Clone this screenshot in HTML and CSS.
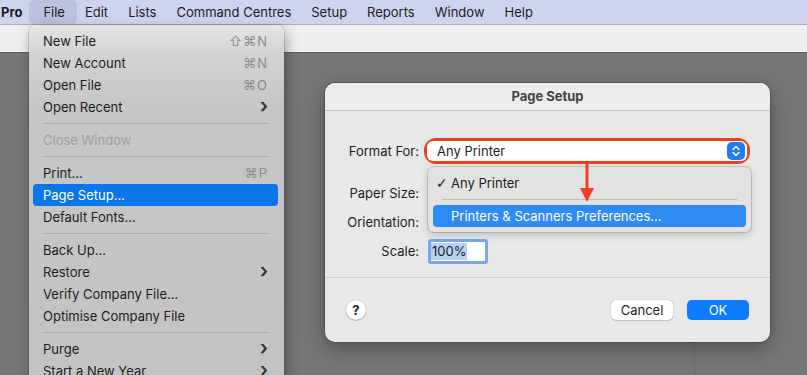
FILE: index.html
```html
<!DOCTYPE html>
<html lang="en">
<head>
  <meta charset="UTF-8">
  <title>Page Setup</title>
  <link rel="stylesheet" href="styles.css">
</head>
<body>

  <div class="menubar">
    <div class="bar-item app">Pro</div>
    <div class="bar-item open">File</div>
    <div class="bar-item">Edit</div>
    <div class="bar-item">Lists</div>
    <div class="bar-item">Command Centres</div>
    <div class="bar-item">Setup</div>
    <div class="bar-item">Reports</div>
    <div class="bar-item">Window</div>
    <div class="bar-item">Help</div>
  </div>
  <div class="toolbar"></div>
  <div class="workspace">
    <div class="guide"></div>
  </div>

  <!-- File menu, dropped down over the window -->
  <div class="file-menu">
    <div class="row">New File<span class="key">⇧⌘N</span></div>
    <div class="row">New Account<span class="key">⌘N</span></div>
    <div class="row">Open File<span class="key">⌘O</span></div>
    <div class="row">Open Recent<span class="chev">›</span></div>
    <div class="sep"></div>
    <div class="row disabled">Close Window</div>
    <div class="sep"></div>
    <div class="row">Print...<span class="key">⌘P</span></div>
    <div class="row active">Page Setup...</div>
    <div class="row">Default Fonts...</div>
    <div class="sep"></div>
    <div class="row">Back Up...</div>
    <div class="row">Restore<span class="chev">›</span></div>
    <div class="row">Verify Company File...</div>
    <div class="row">Optimise Company File</div>
    <div class="sep"></div>
    <div class="row">Purge<span class="chev">›</span></div>
    <div class="row">Start a New Year<span class="chev">›</span></div>
  </div>

  <!-- Page Setup sheet -->
  <div class="dialog">
    <div class="dialog-title">Page Setup</div>
    <div class="dialog-body">
      <div class="field first">
        <label>Format For:</label>
        <div class="callout">
          <div class="popup">
            <span>Any Printer</span>
            <span class="stepper">
              <svg width="10" height="14" viewBox="0 0 10 14"><path d="M2 5.5 L5 2.5 L8 5.5 M2 8.5 L5 11.5 L8 8.5" fill="none" stroke="#fff" stroke-width="1.6" stroke-linecap="round" stroke-linejoin="round"/></svg>
            </span>
          </div>
        </div>
      </div>
      <div class="field paper"><label>Paper Size:</label></div>
      <div class="field"><label>Orientation:</label></div>
      <div class="field">
        <label>Scale:</label>
        <div class="scale"><span class="selected">100%</span></div>
      </div>
    </div>
    <div class="dialog-foot">
      <div class="help">?</div>
      <div class="buttons">
        <div class="btn">Cancel</div>
        <div class="btn primary">OK</div>
      </div>
    </div>

    <div class="dropdown">
      <div class="drop-row"><span class="tick">✓</span>Any Printer</div>
      <div class="drop-sep"></div>
      <div class="drop-row hot">Printers &amp; Scanners Preferences...</div>
    </div>

    <svg class="arrow" width="20" height="40" viewBox="0 0 20 40">
      <line x1="10" y1="0" x2="10" y2="26" stroke="#ee3f24" stroke-width="3"/>
      <polygon points="3,24 17,24 10,38" fill="#ee3f24"/>
    </svg>
  </div>

</body>
</html>
```

FILE: styles.css
```css
html, body {
  margin: 0px;
  padding: 0px;
  height: 100%;
}
body {
  font-family: Inter, "Noto Sans", sans-serif;
  font-size: 13px;
  color: #222;
  display: flex;
  flex-direction: column;
  overflow: hidden;
  background: #777;
}
.menubar {
  height: 24px;
  flex: none;
  display: flex;
  align-items: center;
  background: #cdd5ee;
  border-bottom: 1px solid #a9aec2;
}
.bar-item {
  padding: 0 10px;
  line-height: 24px;
  color: #1c1c1c;
}
.bar-item.app {
  font-weight: 700;
  padding: 0 7px 0 1px;
}
.bar-item.open {
  margin: 0 -2px 0 0;
  padding: 0 12px 0 14px;
  background: #b9c1dc;
  border-radius: 5px;
}
.toolbar {
  height: 27px;
  flex: none;
  background: #efefef;
  border-bottom: 1px solid #5c5c5c;
}
.workspace {
  flex: 1;
  background: #777;
  position: relative;
}
.guide {
  position: absolute;
  left: 694px;
  top: 280px;
  bottom: 0;
  width: 1px;
  background: #6d6d6d;
}

/* file menu */
.file-menu {
  position: absolute;
  left: 29px;
  top: 25px;
  bottom: 0;
  width: 255px;
  padding-top: 5px;
  box-sizing: border-box;
  overflow: hidden;
  border-radius: 7px 7px 0 0;
  background: linear-gradient(#e5e5e5 0px, #d2d2d2 30px, #c6c6c6 80px, #c3c3c3 100%);
  box-shadow: 0 0 0 1px rgba(0,0,0,0.12), 2px 6px 14px rgba(0,0,0,0.35);
}
.row {
  height: 22px;
  margin: 0 6px 0 4px;
  padding: 0 10px;
  border-radius: 4px;
  display: flex;
  align-items: center;
  justify-content: space-between;
  color: #1d1d1d;
}
.row.disabled {
  color: #a0a0a0;
}
.row.active {
  background: #0a76e8;
  color: #fff;
}
.key {
  color: #8c8c8c;
  letter-spacing: 1px;
}
.chev {
  font-size: 20px;
  line-height: 20px;
  font-weight: 600;
  color: #333;
  margin-top: -3px;
}
.sep {
  height: 1px;
  margin: 5px 15px 5px 14px;
  background: #a9a9a9;
}

/* dialog */
.dialog {
  position: absolute;
  left: 325px;
  top: 83px;
  width: 445px;
  height: 259px;
  border-radius: 10px;
  background: #e8e8e8;
  box-shadow: 0 0 0 1px rgba(0,0,0,0.18), 0 6px 20px rgba(0,0,0,0.35);
  display: flex;
  flex-direction: column;
}
.dialog-title {
  height: 27px;
  line-height: 27px;
  text-align: center;
  font-weight: 700;
  color: #444;
  border-bottom: 1px solid #c4c4c4;
  background: #ececec;
  border-radius: 10px 10px 0 0;
}
.dialog-body {
  height: 167px;
  border-bottom: 1px solid #cfcfcf;
  box-sizing: border-box;
  padding-top: 27px;
}
.field {
  display: flex;
  align-items: center;
  height: 26px;
  margin-bottom: 3px;
}
.field.first {
  margin-bottom: 16px;
}
.field label {
  width: 94px;
  text-align: right;
  color: #1e1e1e;
}
.callout {
  margin-left: 5px;
  width: 326px;
  height: 26px;
  box-sizing: border-box;
  border: 3px solid #f03e20;
  border-radius: 12px;
  padding: 0;
}
.popup {
  height: 20px;
  background: #fff;
  border-radius: 6px;
  display: flex;
  align-items: center;
  justify-content: space-between;
  padding: 0 2px 0 10px;
  color: #1e1e1e;
}
.stepper {
  width: 18px;
  height: 18px;
  border-radius: 5px;
  background: #1b7cf3;
  display: flex;
  align-items: center;
  justify-content: center;
}
.scale {
  margin-left: 9px;
  width: 54px;
  height: 19px;
  border: 3px solid #7aa6ea;
  border-radius: 3px;
  background: #fff;
  display: flex;
  align-items: center;
}
.selected {
  background: #b4d1f7;
  padding: 0 1px 0 1px;
  line-height: 17px;
  color: #1e1e1e;
}
.dialog-foot {
  flex: 1;
  display: flex;
  align-items: center;
  justify-content: space-between;
  padding: 0 21px 0 21px;
}
.help {
  width: 20px;
  height: 20px;
  border-radius: 50%;
  background: #fff;
  box-shadow: 0 0 1px rgba(0,0,0,0.4), 0 1px 1px rgba(0,0,0,0.2);
  text-align: center;
  line-height: 20px;
  font-weight: 700;
  font-size: 13px;
  color: #222;
}
.buttons {
  display: flex;
  gap: 14px;
}
.btn {
  width: 62px;
  height: 20px;
  line-height: 20px;
  text-align: center;
  border-radius: 5px;
  background: #fff;
  color: #222;
  box-shadow: 0 0 1px rgba(0,0,0,0.45), 0 1px 1px rgba(0,0,0,0.15);
}
.btn.primary {
  background: #0b7bff;
  color: #fff;
  box-shadow: none;
}
.dropdown {
  position: absolute;
  left: 103px;
  top: 84px;
  width: 323px;
  height: 65px;
  box-sizing: border-box;
  padding: 5px 5px 0 5px;
  border-radius: 6px;
  background: #e2e2e2;
  box-shadow: 0 0 0 1px rgba(0,0,0,0.14), 0 3px 8px rgba(0,0,0,0.18);
}
.drop-row {
  height: 22px;
  display: flex;
  align-items: center;
  padding-left: 18px;
  position: relative;
  border-radius: 4px;
  color: #1e1e1e;
}
.tick {
  position: absolute;
  left: 3px;
  font-family: "DejaVu Sans", sans-serif;
  font-size: 14px;
  font-weight: 700;
}
.drop-sep {
  height: 1px;
  margin: 5px 9px 5px 9px;
  background: #bdbdbd;
}
.drop-row.hot {
  background: #2e8bf4;
  color: #fff;
}
.arrow {
  position: absolute;
  left: 252px;
  top: 81px;
}
```
